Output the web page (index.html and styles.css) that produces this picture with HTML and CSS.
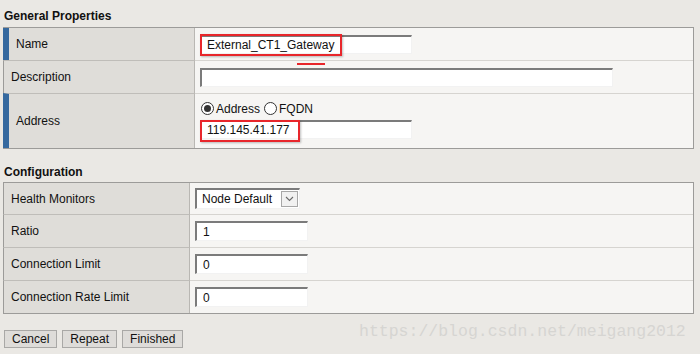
FILE: index.html
```html
<!DOCTYPE html>
<html>
<head>
<meta charset="utf-8">
<link rel="stylesheet" href="styles.css">
</head>
<body>
<div class="page">
  <h2 class="section-title">General Properties</h2>
  <div class="grid-table general">
    <div class="row r-name">
      <div class="label req">Name</div>
      <div class="value">
        <span class="field">
          <input class="text-input w212" type="text" value="External_CT1_Gateway">
          <span class="mark mark-name"></span>
        </span>
      </div>
    </div>
    <div class="row r-desc">
      <div class="label">Description</div>
      <div class="value">
        <span class="stray-mark"></span>
        <input class="text-input w413" type="text" value="">
      </div>
    </div>
    <div class="row r-addr">
      <div class="label req">Address</div>
      <div class="value stack">
        <div class="radios">
          <span class="radio checked"></span><span class="radio-label">Address</span>
          <span class="radio"></span><span class="radio-label">FQDN</span>
        </div>
        <span class="field">
          <input class="text-input w212" type="text" value="119.145.41.177">
          <span class="mark mark-addr"></span>
        </span>
      </div>
    </div>
  </div>

  <h2 class="section-title second">Configuration</h2>
  <div class="grid-table config">
    <div class="row c1">
      <div class="label">Health Monitors</div>
      <div class="value">
        <div class="select">
          <span class="select-text">Node Default</span>
          <span class="select-btn">
            <svg width="9" height="6" viewBox="0 0 9 6"><path d="M1 1 L4.5 4.5 L8 1" fill="none" stroke="#6a6a6a" stroke-width="1.1"/></svg>
          </span>
        </div>
      </div>
    </div>
    <div class="row c2">
      <div class="label">Ratio</div>
      <div class="value"><input class="text-input w113" type="text" value="1"></div>
    </div>
    <div class="row c3">
      <div class="label">Connection Limit</div>
      <div class="value"><input class="text-input w113" type="text" value="0"></div>
    </div>
    <div class="row c4">
      <div class="label">Connection Rate Limit</div>
      <div class="value"><input class="text-input w113" type="text" value="0"></div>
    </div>
  </div>

  <div class="buttons">
    <button class="btn" type="button">Cancel</button>
    <button class="btn" type="button">Repeat</button>
    <button class="btn" type="button">Finished</button>
  </div>
</div>
<div class="watermark">https://blog.csdn.net/meigang2012</div>
</body>
</html>
```
FILE: styles.css
```css
* { box-sizing: border-box; }

html, body {
  margin: 0;
  padding: 0;
}

body {
  width: 700px;
  height: 354px;
  overflow: hidden;
  position: relative;
  background: #eae8e4;
  font-family: "Liberation Sans", Arial, sans-serif;
  font-size: 12px;
  color: #111;
}

.page {
  padding: 9px 6px 0 3px;
}

.section-title {
  margin: 0 0 4px 1px;
  font-size: 12px;
  font-weight: bold;
  line-height: 14px;
  color: #111;
}

.section-title.second {
  margin-top: 16px;
  margin-bottom: 3px;
}

.grid-table {
  width: 691px;
  border: 1px solid #9c9b99;
  border-left: 0;
  background: #f6f5f3;
}

.row {
  display: grid;
  border-top: 1px solid #d6d4d0;
}

.row:first-child { border-top: 0; }

.general .row { grid-template-columns: 192px 1fr; }
.config .row { grid-template-columns: 187px 1fr; }

.label {
  display: flex;
  align-items: center;
  background: #dfddd9;
  border-left: 1px solid #9c9b99;
  border-right: 1px solid #b9b7b3;
  padding-left: 7px;
  margin-top: -1px;
  border-top: 1px solid #bfbdb9;
}

.row:first-child .label { margin-top: 0; border-top: 0; }

.label.req {
  border-left: 6px solid #36699f;
}

.value {
  position: relative;
  display: flex;
  align-items: center;
  padding-left: 5px;
}

.r-name { height: 32px; }
.r-desc { height: 33px; }
.r-addr { height: 55px; }

.value.stack {
  flex-direction: column;
  align-items: flex-start;
  justify-content: flex-start;
  padding-top: 7px;
}

.radios {
  display: flex;
  align-items: center;
  height: 15px;
  margin-bottom: 4px;
  margin-left: 1px;
}

.radio {
  width: 13px;
  height: 13px;
  border: 1px solid #333;
  border-radius: 50%;
  background: #fff;
  position: relative;
  margin-right: 2px;
}

.radio.checked::after {
  content: "";
  position: absolute;
  left: 2px;
  top: 2px;
  width: 7px;
  height: 7px;
  border-radius: 50%;
  background: #333;
}

.radio-label { margin-right: 4px; }

.field {
  position: relative;
  display: inline-block;
}

.text-input {
  display: block;
  height: 19px;
  padding: 0 0 0 5px;
  margin: 0;
  border: 0;
  border-top: 2px solid #7b7b7b;
  border-left: 2px solid #7b7b7b;
  border-right: 1px solid #f2f2f2;
  border-bottom: 1px solid #f2f2f2;
  background: #fff;
  font-family: "Liberation Sans", Arial, sans-serif;
  font-size: 12px;
  color: #111;
  outline: none;
}

.w212 { width: 212px; }
.w413 { width: 413px; }
.w113 { width: 113px; height: 20px; padding-left: 6px; }

.mark {
  position: absolute;
  border: 2px solid #e8262b;
  box-shadow: 1px 1px 2px rgba(0,0,0,0.25);
  pointer-events: none;
}

.mark-name { left: 0; top: -1px; width: 142px; height: 22px; }
.mark-addr { left: 0; top: 0; width: 100px; height: 22px; }

.stray-mark {
  position: absolute;
  left: 102px;
  top: 2px;
  width: 28px;
  height: 2px;
  background: #e8262b;
}

/* config */
.c1 { height: 31px; }
.c2, .c3 { height: 33px; }
.c4 { height: 33px; }

.select {
  display: flex;
  align-items: center;
  width: 105px;
  height: 21px;
  background: #fff;
  border-top: 2px solid #7b7b7b;
  border-left: 2px solid #7b7b7b;
  border-right: 1px solid #f2f2f2;
  border-bottom: 1px solid #f2f2f2;
  padding-left: 5px;
}

.select-text { flex: 1; }

.select-btn {
  display: flex;
  align-items: center;
  justify-content: center;
  width: 17px;
  height: 16px;
  border: 1px solid #a7a7a7;
  background: #f1f1f1;
  margin-right: 1px;
}

.buttons {
  display: flex;
  gap: 5px;
  margin-top: 16px;
  margin-left: 1px;
}

.btn {
  height: 18px;
  padding: 0 7px;
  margin: 0;
  border: 1px solid #a9a8a6;
  background: #dedcd9;
  font-family: "Liberation Sans", Arial, sans-serif;
  font-size: 12px;
  color: #111;
  line-height: 16px;
}

.watermark {
  position: absolute;
  left: 359px;
  top: 322px;
  font-family: "Liberation Mono", "DejaVu Sans Mono", monospace;
  font-size: 16.5px;
  line-height: 20px;
  color: #d6d5d2;
  white-space: nowrap;
}
```
